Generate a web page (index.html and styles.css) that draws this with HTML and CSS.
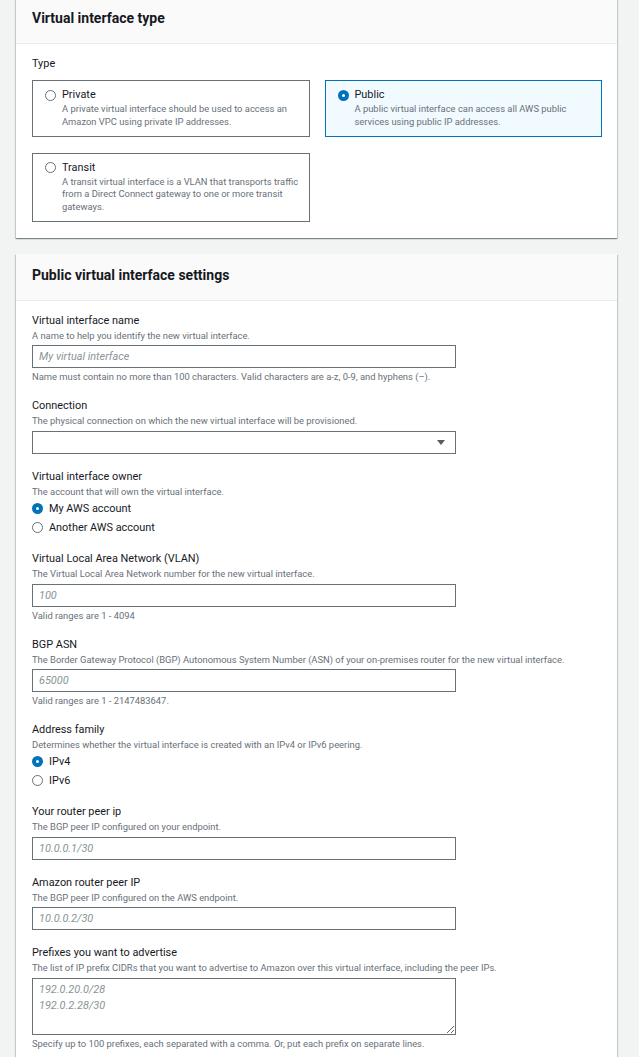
FILE: index.html
```html
<!DOCTYPE html>
<html lang="en">
<head>
<meta charset="utf-8">
<title>Create virtual interface</title>
<link rel="stylesheet" href="styles.css">
</head>
<body>
<div class="page">
  <section class="card card-first">
    <header class="card-header"><h2>Virtual interface type</h2></header>
    <div class="card-body">
      <div class="label">Type</div>
      <div class="tiles">
        <div class="tile">
          <span class="radio"></span>
          <div class="tile-text">
            <div class="tile-title">Private</div>
            <div class="tile-desc">A private virtual interface should be used to access an Amazon VPC using private IP addresses.</div>
          </div>
        </div>
        <div class="tile tile-selected">
          <span class="radio radio-checked"></span>
          <div class="tile-text">
            <div class="tile-title">Public</div>
            <div class="tile-desc">A public virtual interface can access all AWS public services using public IP addresses.</div>
          </div>
        </div>
        <div class="tile">
          <span class="radio"></span>
          <div class="tile-text">
            <div class="tile-title">Transit</div>
            <div class="tile-desc">A transit virtual interface is a VLAN that transports traffic from a Direct Connect gateway to one or more transit gateways.</div>
          </div>
        </div>
      </div>
    </div>
  </section>

  <section class="card">
    <header class="card-header"><h2>Public virtual interface settings</h2></header>
    <div class="card-body">
      <div class="field">
        <div class="label">Virtual interface name</div>
        <div class="desc">A name to help you identify the new virtual interface.</div>
        <input class="input" type="text" placeholder="My virtual interface">
        <div class="hint">Name must contain no more than 100 characters. Valid characters are a-z, 0-9, and hyphens (–).</div>
      </div>

      <div class="field">
        <div class="label">Connection</div>
        <div class="desc">The physical connection on which the new virtual interface will be provisioned.</div>
        <div class="select">
          <span class="select-value"></span>
          <svg class="caret" width="8" height="5" viewBox="0 0 8 5"><path d="M0 0H8L4 5Z" fill="#545b64"/></svg>
        </div>
      </div>

      <div class="field field-radios">
        <div class="label">Virtual interface owner</div>
        <div class="desc">The account that will own the virtual interface.</div>
        <div class="radio-row"><span class="radio radio-checked"></span><span class="radio-label">My AWS account</span></div>
        <div class="radio-row"><span class="radio"></span><span class="radio-label">Another AWS account</span></div>
      </div>

      <div class="field">
        <div class="label">Virtual Local Area Network (VLAN)</div>
        <div class="desc">The Virtual Local Area Network number for the new virtual interface.</div>
        <input class="input" type="text" placeholder="100">
        <div class="hint">Valid ranges are 1 - 4094</div>
      </div>

      <div class="field">
        <div class="label">BGP ASN</div>
        <div class="desc">The Border Gateway Protocol (BGP) Autonomous System Number (ASN) of your on-premises router for the new virtual interface.</div>
        <input class="input" type="text" placeholder="65000">
        <div class="hint">Valid ranges are 1 - 2147483647.</div>
      </div>

      <div class="field field-radios">
        <div class="label">Address family</div>
        <div class="desc">Determines whether the virtual interface is created with an IPv4 or IPv6 peering.</div>
        <div class="radio-row"><span class="radio radio-checked"></span><span class="radio-label">IPv4</span></div>
        <div class="radio-row"><span class="radio"></span><span class="radio-label">IPv6</span></div>
      </div>

      <div class="field">
        <div class="label">Your router peer ip</div>
        <div class="desc">The BGP peer IP configured on your endpoint.</div>
        <input class="input" type="text" placeholder="10.0.0.1/30">
      </div>

      <div class="field">
        <div class="label">Amazon router peer IP</div>
        <div class="desc">The BGP peer IP configured on the AWS endpoint.</div>
        <input class="input" type="text" placeholder="10.0.0.2/30">
      </div>

      <div class="field">
        <div class="label">Prefixes you want to advertise</div>
        <div class="desc">The list of IP prefix CIDRs that you want to advertise to Amazon over this virtual interface, including the peer IPs.</div>
        <textarea class="textarea" placeholder="192.0.20.0/28&#10;192.0.2.28/30"></textarea>
        <div class="hint">Specify up to 100 prefixes, each separated with a comma. Or, put each prefix on separate lines.</div>
      </div>
    </div>
  </section>
</div>
</body>
</html>
```

FILE: styles.css
```css
* {
  box-sizing: border-box;
}

html, body {
  margin: 0;
  padding: 0;
  background: #f2f3f3;
  font-family: Roboto, "Liberation Sans", Arial, sans-serif;
  color: #16191f;
}

.page {
  padding: 0 22px 40px 16px;
}

.card {
  background: #ffffff;
  box-shadow: 0 1px 1px 0 rgba(0, 28, 36, 0.3), 1px 1px 1px 0 rgba(0, 28, 36, 0.15), -1px 1px 1px 0 rgba(0, 28, 36, 0.15);
  margin-bottom: 16px;
}

.card-first {
  margin-top: -3px;
}

.card-header {
  background: #fafafa;
  border-bottom: 1px solid #eaeded;
  padding: 11px 16px 15px 16px;
}

.card-header h2 {
  margin: 0;
  font-size: 14px;
  line-height: 20px;
  font-weight: 700;
  color: #16191f;
}

.card-body {
  padding: 12px 15px 16px 16px;
}

.label {
  font-size: 10.9px;
  line-height: 16px;
  color: #16191f;
}

.card-first .label {
  margin-bottom: 8px;
}

.desc {
  font-size: 9.4px;
  line-height: 14px;
  color: #687078;
}

.hint {
  font-size: 9.4px;
  line-height: 12px;
  margin-top: 3px;
  color: #687078;
}

.field {
  margin-bottom: 15px;
}

.field-radios {
  margin-bottom: 14px;
}

.field:last-child {
  margin-bottom: 0;
}

.tiles {
  display: grid;
  grid-template-columns: 1fr 1fr;
  column-gap: 15px;
  row-gap: 16px;
}

.tile {
  display: flex;
  align-items: flex-start;
  gap: 6px;
  border: 1px solid #687078;
  padding: 6px 8px 7.5px 12px;
  background: #ffffff;
}

.tile-selected {
  border-color: #0073bb;
  background: #f1faff;
}

.tile .radio {
  margin-top: 2.5px;
}

.tile-text {
  flex: 1;
}

.tile-title {
  font-size: 10.9px;
  line-height: 16px;
  color: #16191f;
}

.tile-desc {
  font-size: 9.4px;
  line-height: 12.5px;
  color: #687078;
}

.radio {
  flex: none;
  display: inline-block;
  width: 11px;
  height: 11px;
  border-radius: 50%;
  border: 1px solid #687078;
  background: #ffffff;
}

.radio-checked {
  border: 4px solid #0073bb;
}

.radio-row {
  display: flex;
  align-items: center;
  gap: 6px;
  height: 19px;
}

.radio-label {
  font-size: 10.9px;
  line-height: 16px;
  color: #16191f;
}

.input,
.select,
.textarea {
  display: block;
  width: 424px;
  margin: 2.5px 0 0 0;
  border: 1px solid #687078;
  background: #ffffff;
  font-family: Roboto, "Liberation Sans", Arial, sans-serif;
  font-size: 10.9px;
  color: #16191f;
  border-radius: 0;
}

.input {
  height: 23px;
  padding: 0 6px;
  outline: none;
}

.input::placeholder,
.textarea::placeholder {
  color: #879596;
  font-style: italic;
  opacity: 1;
}

.select {
  height: 23px;
  margin-top: 3px;
  display: flex;
  align-items: center;
  justify-content: space-between;
  padding: 0 10px 0 6px;
}

.caret {
  display: block;
}

.textarea {
  height: 57px;
  padding: 3px 6px;
  line-height: 16px;
  resize: both;
  outline: none;
}
```
